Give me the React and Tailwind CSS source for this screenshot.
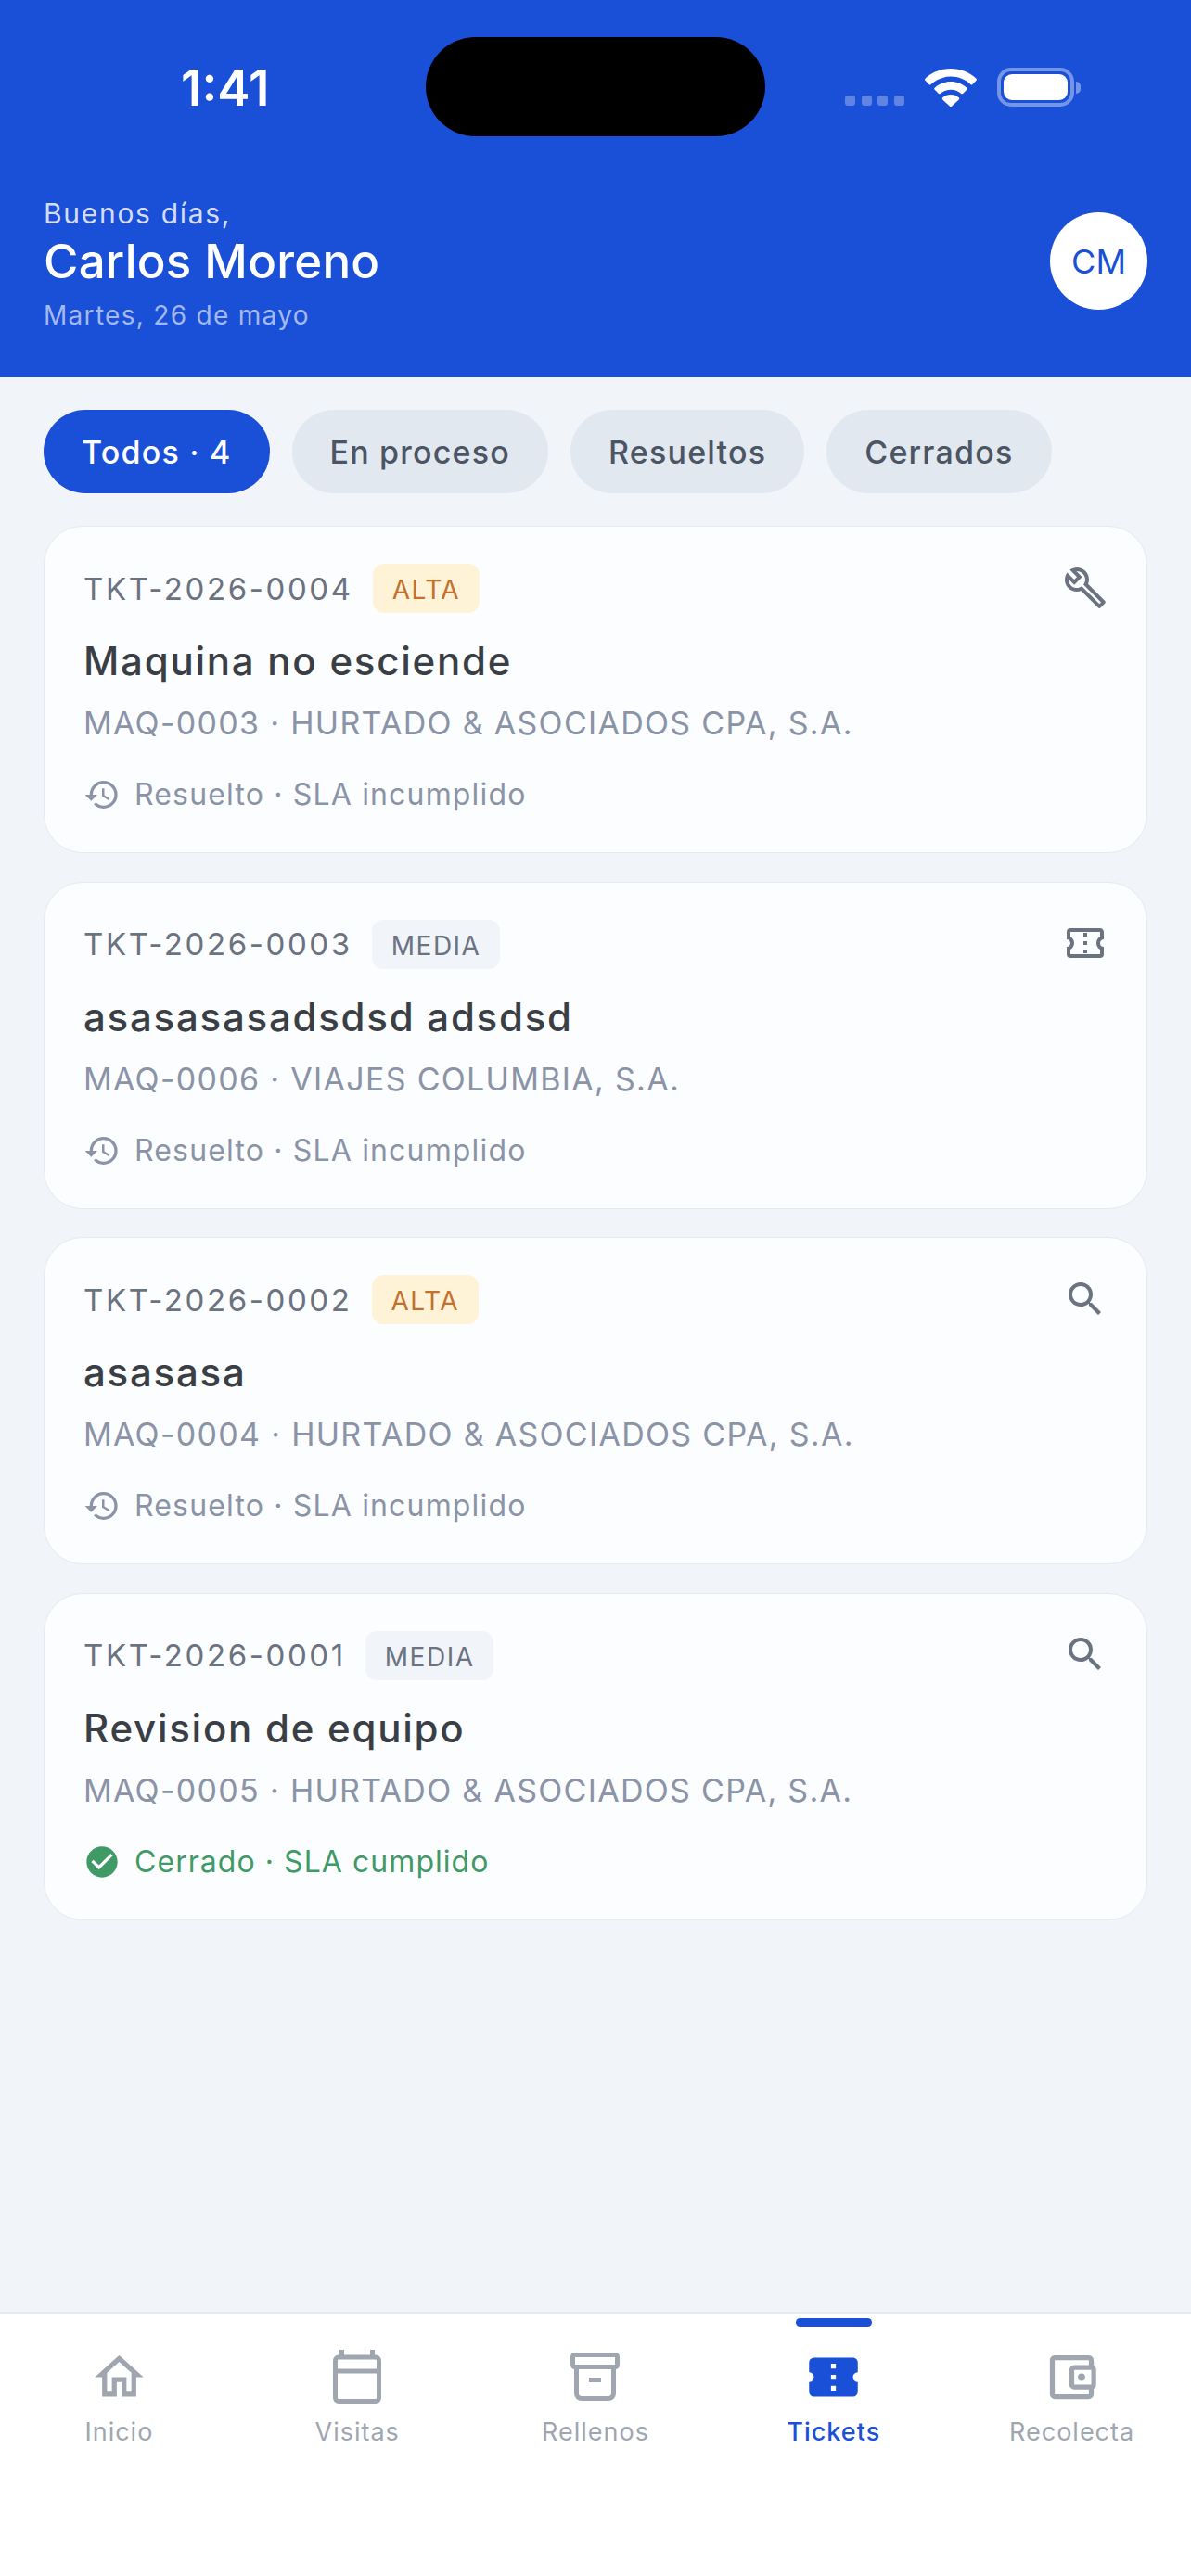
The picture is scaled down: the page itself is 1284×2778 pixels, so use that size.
const paths = {
  wrench: 'M22.61,19L13.53,9.91C14.46,7.57 14,4.81 12.09,2.91C9.79,0.61 6.21,0.4 3.66,2.26L7.5,6.11L6.08,7.5L2.25,3.69C0.39,6.23 0.6,9.82 2.9,12.11C4.76,13.97 7.47,14.46 9.79,13.59L18.9,22.68C19.29,23.07 19.92,23.07 20.31,22.68L22.61,20.39C23,20 23,19.39 22.61,19M19.61,20.59L10.15,11.13C9.54,11.58 8.86,11.85 8.15,11.95C6.79,12.15 5.36,11.74 4.32,10.7C3.37,9.76 2.93,8.5 3,7.26L6.09,10.35L10.33,6.11L7.25,3C8.5,2.95 9.73,3.39 10.68,4.33C11.76,5.41 12.17,6.9 11.92,8.29C11.8,9 11.5,9.66 11.04,10.25L20.5,19.7L19.61,20.59Z',
  ticketOutline: 'M4,4A2,2 0 0,0 2,6V10C3.11,10 4,10.9 4,12A2,2 0 0,1 2,14V18A2,2 0 0,0 4,20H20A2,2 0 0,0 22,18V14A2,2 0 0,1 20,12C20,10.89 20.9,10 22,10V6C22,4.89 21.1,4 20,4H4M4,6H20V8.54C18.76,9.25 18,10.57 18,12C18,13.43 18.76,14.75 20,15.46V18H4V15.46C5.24,14.75 6,13.43 6,12C6,10.57 5.24,9.25 4,8.54V6M11,15.5V17.5H13V15.5H11M11,11V13H13V11H11M11,6.5V8.5H13V6.5H11Z',
  ticket: 'M22,10V6C22,4.89 21.1,4 20,4H4A2,2 0 0,0 2,6V10C3.11,10 4,10.9 4,12A2,2 0 0,1 2,14V18A2,2 0 0,0 4,20H20A2,2 0 0,0 22,18V14A2,2 0 0,1 20,12A2,2 0 0,1 22,10M13,17.5H11V15.5H13V17.5M13,13H11V11H13V13M13,8.5H11V6.5H13V8.5Z',
  magnify: 'M9.5,3A6.5,6.5 0 0,1 16,9.5C16,11.11 15.41,12.59 14.44,13.73L14.71,14H15.5L20.5,19L19,20.5L14,15.5V14.71L13.73,14.44C12.59,15.41 11.11,16 9.5,16A6.5,6.5 0 0,1 3,9.5A6.5,6.5 0 0,1 9.5,3M9.5,5C7,5 5,7 5,9.5C5,12 7,14 9.5,14C12,14 14,12 14,9.5C14,7 12,5 9.5,5Z',
  history: 'M13.5,8H12V13L16.28,15.54L17,14.33L13.5,12.25V8M13,3A9,9 0 0,0 4,12H1L4.96,16.03L9,12H6A7,7 0 0,1 13,5A7,7 0 0,1 20,12A7,7 0 0,1 13,19C11.07,19 9.32,18.21 8.06,16.94L6.64,18.36C8.27,20 10.5,21 13,21A9,9 0 0,0 22,12A9,9 0 0,0 13,3',
  check: 'M12 2C6.5 2 2 6.5 2 12S6.5 22 12 22 22 17.5 22 12 17.5 2 12 2M10 17L5 12L6.41 10.59L10 14.17L17.59 6.58L19 8L10 17Z',
  home: 'M12 5.69l5 4.5V18h-2v-6H9v6H7v-7.81l5-4.5M12 3L2 12h3v8h6v-6h2v6h6v-8h3L12 3z',
  wallet: 'M5,3C3.89,3 3,3.9 3,5V19A2,2 0 0,0 5,21H19A2,2 0 0,0 21,19V16.72C21.59,16.37 22,15.74 22,15V9C22,8.26 21.59,7.63 21,7.28V5A2,2 0 0,0 19,3H5M5,5H19V7H13A2,2 0 0,0 11,9V15A2,2 0 0,0 13,17H19V19H5V5M13,9H20V15H13V9M16,10.5A1.5,1.5 0 0,0 14.5,12A1.5,1.5 0 0,0 16,13.5A1.5,1.5 0 0,0 17.5,12A1.5,1.5 0 0,0 16,10.5Z',
};

function Icon({ d, className }) {
  return (
    <svg viewBox="0 0 24 24" fill="currentColor" className={className}>
      <path d={d} />
    </svg>
  );
}

function CalendarIcon({ className }) {
  return (
    <svg viewBox="0 0 52 58" fill="none" stroke="currentColor" strokeWidth="5" className={className}>
      <rect x="2.5" y="8" width="47" height="47.5" rx="3.5" />
      <path d="M2.5 23h47" />
      <path d="M9.5 0v8M42.500 0v8" />
    </svg>
  );
}

function ArchiveIcon({ className }) {
  return (
    <svg viewBox="0 0 53 52" fill="none" stroke="currentColor" strokeWidth="5" className={className}>
      <rect x="2.5" y="2.500" width="48" height="13" rx="2" />
      <path d="M6.500 16v28a5.500 5.500 0 0 0 5.500 5.500h29a5.500 5.500 0 0 0 5.500-5.500V16" />
      <path d="M20 29.500h13" />
    </svg>
  );
}

function WifiIcon() {
  return (
    <svg viewBox="0 0 56 41" fill="white" className="w-[56px] h-[41px]">
      <path d="M28 0c10.500 0 20.200 4 27.500 10.700a1.500 1.500 0 0 1 0 2.100l-4 4.100a1.500 1.500 0 0 1-2.100 0C43.700 11.800 36.200 8.600 28 8.600S12.300 11.800 6.600 16.900a1.500 1.500 0 0 1-2.100 0l-4-4.100a1.500 1.500 0 0 1 0-2.100C7.800 4 17.500 0 28 0z" />
      <path d="M28 14c6.600 0 12.700 2.500 17.300 6.700a1.500 1.500 0 0 1 0 2.100l-4 4a1.500 1.500 0 0 1-2 .100C36.200 24.200 32.300 22.700 28 22.700s-8.200 1.500-11.300 4.200a1.500 1.500 0 0 1-2-.100l-4-4a1.500 1.500 0 0 1 0-2.100C15.300 16.500 21.400 14 28 14z" />
      <path d="M28 28c3.300 0 6.400 1.200 8.700 3.300a1.500 1.500 0 0 1 .100 2.100l-7.600 7.100a1.700 1.700 0 0 1-2.400 0l-7.600-7.100a1.500 1.500 0 0 1 .100-2.100C21.600 29.200 24.700 28 28 28z" />
    </svg>
  );
}

const tickets = [
  { id: 'TKT-2026-0004', level: 'ALTA', title: 'Maquina no esciende', sub: 'MAQ-0003 · HURTADO & ASOCIADOS CPA, S.A.', icon: paths.wrench },
  { id: 'TKT-2026-0003', level: 'MEDIA', title: 'asasasasadsdsd adsdsd', sub: 'MAQ-0006 · VIAJES COLUMBIA, S.A.', icon: paths.ticketOutline },
  { id: 'TKT-2026-0002', level: 'ALTA', title: 'asasasa', sub: 'MAQ-0004 · HURTADO & ASOCIADOS CPA, S.A.', icon: paths.magnify },
  { id: 'TKT-2026-0001', level: 'MEDIA', title: 'Revision de equipo', sub: 'MAQ-0005 · HURTADO & ASOCIADOS CPA, S.A.', icon: paths.magnify, closed: true },
];

function TicketCard({ t }) {
  return (
    <div className="h-[353px] rounded-[42px] border border-[#e6eaf0] bg-[#fcfdff] pl-[42px] pr-[42px] pt-[40px]">
      <div className="flex items-center h-[53px]">
        <span className="mt-[2px] text-[33px] tracking-[2.6px] text-[#6b7280]">{t.id}</span>
        {t.level === 'ALTA' ? (
          <span className="ml-[21px] h-[53px] rounded-[12px] bg-[#fef3d6] px-[21px] pt-[3px] flex items-center text-[28px] tracking-[1.5px] text-[#c2702e]">ALTA</span>
        ) : (
          <span className="ml-[21px] h-[53px] rounded-[12px] bg-[#f1f4f8] px-[21px] pt-[3px] flex items-center text-[28px] tracking-[1.5px] text-[#6b7280]">MEDIA</span>
        )}
        <Icon d={t.icon} className="ml-auto w-[48px] h-[48px] text-[#6b7280] mb-[2px]" />
      </div>
      <div className="mt-[27px] h-[50px] leading-[50px] text-[42px] font-[450] tracking-[1.75px] text-[#3a3f46]">{t.title}</div>
      <div className="mt-[20px] h-[44px] leading-[44px] text-[34px] tracking-[1.3px] text-[#8a94a6]">{t.sub}</div>
      <div className="mt-[33px] flex items-center h-[44px]">
        <Icon d={t.closed ? paths.check : paths.history} className={t.closed ? 'w-[40px] h-[40px] text-[#3f9a66]' : 'w-[40px] h-[40px] text-[#8a94a6]'} />
        <span className={t.closed ? 'ml-[15px] text-[32px] tracking-[1.05px] text-[#3f9a66]' : 'ml-[15px] text-[32px] tracking-[1.16px] text-[#8a94a6]'}>
          {t.closed ? 'Cerrado · SLA cumplido' : 'Resuelto · SLA incumplido'}
        </span>
      </div>
    </div>
  );
}

function NavTab({ label, active, children }) {
  return (
    <div className={active ? 'relative flex flex-col items-center text-[#1a4fd8]' : 'relative flex flex-col items-center text-[#a0a6b0]'}>
      {active && <div className="absolute top-[5px] w-[82px] h-[9px] rounded-full bg-[#1a4fd8]" />}
      <div className="h-[70px] mt-[33px] flex items-center justify-center">{children}</div>
      <span className={active ? 'mt-[5px] leading-[40px] text-[27px] tracking-[1px] font-medium' : 'mt-[5px] leading-[40px] text-[27px] tracking-[1px]'}>{label}</span>
    </div>
  );
}

const chip = 'h-[90px] rounded-full px-[41px] pt-[1px] flex items-center text-[34px] font-[450] tracking-[1.2px]';

export default function App() {
  return (
    <div className="min-h-[2778px] flex flex-col bg-[#f1f4f9] font-['Inter',sans-serif]">
      <header className="h-[407px] bg-[#1a4fd8] text-white">
        <div className="flex items-center pt-[40px]">
          <div className="w-[459px] h-[107px] pl-[195px] text-[53px] font-semibold leading-[110px]">1:41</div>
          <div className="w-[366px] h-[107px] rounded-full bg-black" />
          <div className="ml-[86px] flex items-end h-[42px]">
            <div className="flex gap-[6.500px] mb-[1px]">
              <span className="w-[11px] h-[11px] rounded-[3px] bg-white/30" />
              <span className="w-[11px] h-[11px] rounded-[3px] bg-white/30" />
              <span className="w-[11px] h-[11px] rounded-[3px] bg-white/30" />
              <span className="w-[11px] h-[11px] rounded-[3px] bg-white/30" />
            </div>
            <div className="ml-[22px]"><WifiIcon /></div>
            <div className="ml-[22px] w-[83px] h-[42px] rounded-[15px] border-[4px] border-white/40 p-[3px]">
              <div className="w-full h-full rounded-[9px] bg-white" />
            </div>
            <div className="ml-[2px] mb-[14px] w-[5px] h-[13px] rounded-r-full bg-white/40" />
          </div>
        </div>
        <div className="mt-[65px] pl-[47px] pr-[47px] flex items-start justify-between">
          <div>
            <div className="text-[30px] leading-[36px] tracking-[1.7px] text-[#d3ddf8]">Buenos días,</div>
            <div className="mt-[4px] text-[51px] leading-[60px] font-medium tracking-[0.25px] text-white">Carlos Moreno</div>
            <div className="mt-[10px] text-[28px] leading-[36px] tracking-[1.3px] text-[#a3b9f0]">Martes, 26 de mayo</div>
          </div>
          <div className="mt-[17px] w-[105px] h-[105px] rounded-full bg-white flex items-center justify-center text-[36px] font-normal text-[#1a4fd8]">CM</div>
        </div>
      </header>

      <main className="flex-1 px-[47px] pt-[35px]">
        <div className="flex gap-[24px]">
          <div className={chip + ' bg-[#1a4fd8] text-white'}>Todos · 4</div>
          <div className={chip + ' bg-[#e2e8f0] text-[#4b5563]'}>En proceso</div>
          <div className={chip + ' bg-[#e2e8f0] text-[#4b5563]'}>Resueltos</div>
          <div className={chip + ' bg-[#e2e8f0] text-[#4b5563]'}>Cerrados</div>
        </div>
        <div className="mt-[35px] flex flex-col gap-[30.500px]">
          {tickets.map((t) => <TicketCard key={t.id} t={t} />)}
        </div>
      </main>

      <nav className="h-[285px] border-t-[2px] border-[#e8eaee] bg-white grid grid-cols-5">
        <NavTab label="Inicio"><Icon d={paths.home} className="w-[63px] h-[63px]" /></NavTab>
        <NavTab label="Visitas"><CalendarIcon className="w-[52px] h-[58px]" /></NavTab>
        <NavTab label="Rellenos"><ArchiveIcon className="w-[53px] h-[52px]" /></NavTab>
        <NavTab label="Tickets" active><Icon d={paths.ticket} className="w-[63px] h-[63px]" /></NavTab>
        <NavTab label="Recolecta"><Icon d={paths.wallet} className="w-[63px] h-[63px]" /></NavTab>
      </nav>
    </div>
  );
}
